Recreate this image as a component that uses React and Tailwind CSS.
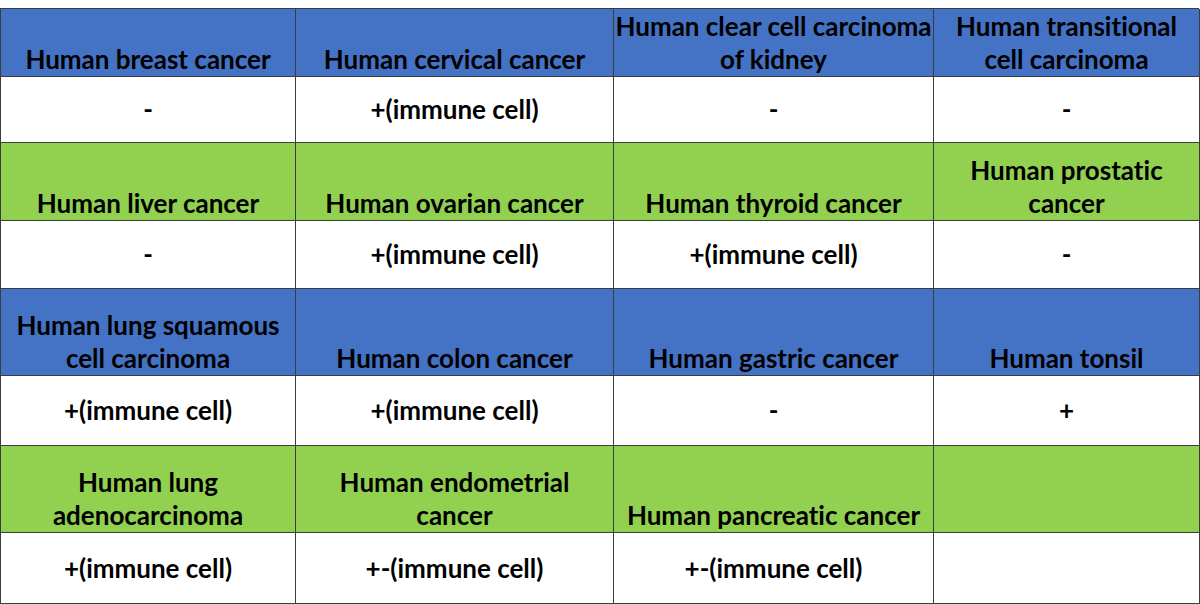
import React from "react";

const rows = [
  {
    color: "bg-[#4472c4]",
    h: "h-[68px]",
    dh: "h-[66px]",
    heads: [["Human breast cancer"], ["Human cervical cancer"], ["Human clear cell carcinoma", "of kidney"], ["Human transitional", "cell carcinoma"]],
    vals: ["-", "+(immune cell)", "-", "-"],
  },
  {
    color: "bg-[#92d050]",
    h: "h-[78px]",
    dh: "h-[68px]",
    heads: [["Human liver cancer"], ["Human ovarian cancer"], ["Human thyroid cancer"], ["Human prostatic", "cancer"]],
    vals: ["-", "+(immune cell)", "+(immune cell)", "-"],
  },
  {
    color: "bg-[#4472c4]",
    h: "h-[87px]",
    dh: "h-[70px]",
    heads: [["Human lung squamous", "cell carcinoma"], ["Human colon cancer"], ["Human gastric cancer"], ["Human tonsil"]],
    vals: ["+(immune cell)", "+(immune cell)", "-", "+"],
  },
  {
    color: "bg-[#92d050]",
    h: "h-[87px]",
    dh: "h-[71px]",
    heads: [["Human lung", "adenocarcinoma"], ["Human endometrial", "cancer"], ["Human pancreatic cancer"], []],
    vals: ["+(immune cell)", "+-(immune cell)", "+-(immune cell)", ""],
  },
];

export default function App() {
  return (
    <div className="bg-white w-[1200px] h-[604px] pt-2 font-['Lato',sans-serif] font-bold text-black text-[26px] [font-variant-ligatures:none]">
      <div className="w-[1199px] border-l border-t border-[#3c3c3c] grid grid-cols-[295px_318px_320px_266px]">
        {rows.map((r, i) => (
          <React.Fragment key={i}>
            {r.heads.map((lines, j) => (
              <div
                key={"h" + j}
                className={`${r.color} ${r.h} border-r border-b border-[#3c3c3c] flex flex-col justify-end items-center text-center leading-[33px] whitespace-nowrap`}
              >
                {lines.map((l, k) => (
                  <span key={k}>{l}</span>
                ))}
              </div>
            ))}
            {r.vals.map((v, j) => (
              <div
                key={"v" + j}
                className={`bg-white ${r.dh} border-r border-b border-[#3c3c3c] flex items-center justify-center`}
              >
                {v}
              </div>
            ))}
          </React.Fragment>
        ))}
      </div>
    </div>
  );
}
